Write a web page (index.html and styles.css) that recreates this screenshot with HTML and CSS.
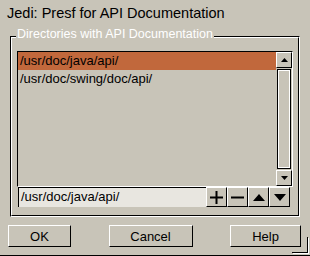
FILE: index.html
```html
<!DOCTYPE html>
<html lang="en">
<head>
    <meta charset="UTF-8">
    <title>Jedi: Presf for API Documentation</title>
    <link rel="stylesheet" href="styles.css">
</head>
<body>
    <!-- Window title -->
    <div class="title">Jedi: Presf for API Documentation</div>

    <!-- Group box -->
    <div class="group">
        <span class="legend">Directories with API Documentation</span>
        <div class="group-inner">
            <div class="listbox">
                <ul class="list">
                    <li class="selected">/usr/doc/java/api/</li>
                    <li>/usr/doc/swing/doc/api/</li>
                </ul>
                <div class="scrollbar">
                    <div class="sb-btn">
                        <svg width="7" height="4" viewBox="0 0 7 4"><polygon points="3.5,0 7,4 0,4" fill="#000"/></svg>
                    </div>
                    <div class="sb-thumb"></div>
                    <div class="sb-btn">
                        <svg width="7" height="4" viewBox="0 0 7 4"><polygon points="0,0 7,0 3.5,4" fill="#000"/></svg>
                    </div>
                </div>
            </div>

            <div class="edit-row">
                <div class="field">/usr/doc/java/api/</div>
                <button class="tool-btn">
                    <svg width="13" height="13" viewBox="0 0 13 13"><rect x="0" y="5.5" width="13" height="2" fill="#000"/><rect x="5.5" y="0" width="2" height="13" fill="#000"/></svg>
                </button>
                <button class="tool-btn">
                    <svg width="13" height="13" viewBox="0 0 13 13"><rect x="0" y="5.5" width="13" height="2" fill="#000"/></svg>
                </button>
                <button class="tool-btn">
                    <svg width="12" height="7" viewBox="0 0 12 7"><polygon points="6,0 12,7 0,7" fill="#000"/></svg>
                </button>
                <button class="tool-btn">
                    <svg width="12" height="7" viewBox="0 0 12 7"><polygon points="0,0 12,0 6,7" fill="#000"/></svg>
                </button>
            </div>
        </div>
    </div>

    <!-- Dialog buttons -->
    <div class="actions">
        <button class="btn btn-ok">OK</button>
        <button class="btn btn-cancel">Cancel</button>
        <button class="btn btn-help">Help</button>
    </div>
</body>
</html>
```

FILE: styles.css
```css
/* General Styling */
* {
    box-sizing: border-box;
}

body {
    font-family: 'Liberation Sans', Arial, sans-serif;
    background: #c8c4b8;
    color: #000;
    margin: 0;
    width: 310px;
    height: 256px;
    border-bottom: 1px solid #000;
    display: flex;
    flex-direction: column;
    overflow: hidden;
}

/* Title */
.title {
    font-size: 14.5px;
    line-height: 17px;
    padding: 5px 0 0 7px;
    height: 22px;
}

/* Group Box (etched) */
.group {
    position: relative;
    margin: 14px 10px 0 10px;
    height: 181px;
    border: 1px solid;
    border-color: #000 #fff #fff #000;
}

.group-inner {
    height: 100%;
    border: 1px solid;
    border-color: #fff #000 #000 #fff;
    padding: 13px 5px 0 5px;
}

.legend {
    position: absolute;
    left: 5px;
    top: -10px;
    padding: 0 1px;
    font-size: 12.5px;
    line-height: 14px;
    color: #fff;
    background: #c8c4b8;
}

/* List + Scrollbar */
.listbox {
    display: flex;
    height: 136px;
    border: 1px solid;
    border-color: #000 #fff #fff #000;
}

.list {
    list-style: none;
    margin: 0;
    padding: 0;
    flex: 1;
    font-size: 13px;
}

.list li {
    height: 17px;
    line-height: 17px;
    padding-left: 2px;
    white-space: nowrap;
}

.list li.selected {
    background: #c1683c;
    height: 18px;
}

.scrollbar {
    width: 16px;
    display: flex;
    flex-direction: column;
}

.sb-btn {
    height: 16px;
    border: 1px solid;
    border-color: #fff #000 #000 #fff;
    display: flex;
    align-items: center;
    justify-content: center;
}

.sb-thumb {
    flex: 1;
    margin: 1px 1px 1px 1px;
    border: 1px solid #000;
    box-shadow: inset 1px 1px 0 #fff, inset -1px -1px 0 #fff;
}

/* Entry Row */
.edit-row {
    display: flex;
    height: 20px;
    margin-left: 1px;
}

.field {
    width: 188px;
    background: #e8e6e0;
    border-top: 1px solid #000;
    border-left: 1px solid #000;
    font-size: 13px;
    line-height: 18px;
    padding-left: 2px;
    white-space: nowrap;
}

.tool-btn {
    width: 21px;
    height: 20px;
    padding: 0;
    margin: 0;
    background: #c8c4b8;
    border: 1px solid;
    border-color: #fff #000 #000 #fff;
    display: flex;
    align-items: center;
    justify-content: center;
}

/* Dialog Buttons */
.actions {
    display: flex;
    justify-content: space-between;
    padding: 0 9px 0 8px;
    margin-top: 8px;
}

.btn {
    position: relative;
    height: 22px;
    padding: 0;
    background: #c8c4b8;
    border: 1px solid;
    border-color: #fff #000 #000 #fff;
    font-family: 'Liberation Sans', Arial, sans-serif;
    font-size: 13px;
    color: #000;
}

.btn-ok {
    width: 63px;
}

.btn-cancel {
    width: 84px;
}

.btn-help {
    width: 71px;
}

/* Default button ring corner */
.btn-help::after {
    content: "";
    position: absolute;
    left: 61px;
    top: 11px;
    width: 15px;
    height: 15px;
    border-right: 1px solid #000;
    border-bottom: 1px solid #000;
    box-shadow: 1px 1px 0 #fff;
}
```
